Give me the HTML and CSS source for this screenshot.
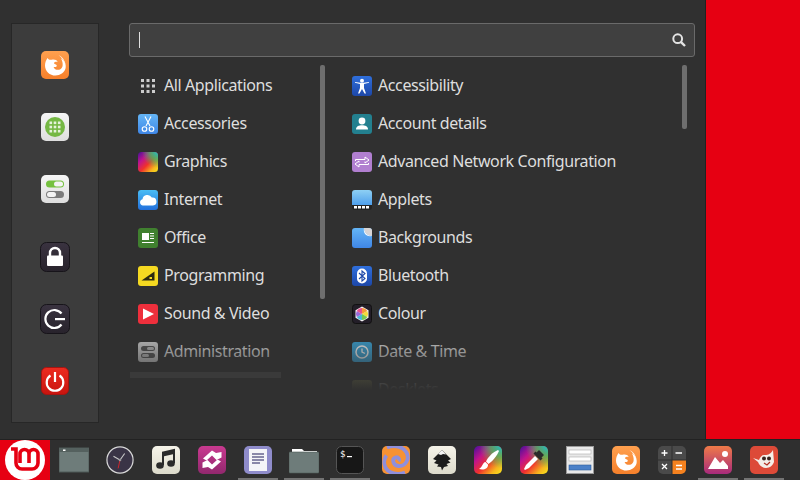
FILE: index.html
```html
<!DOCTYPE html>
<html lang="en">
<head>
  <meta charset="UTF-8" />
  <meta name="viewport" content="width=device-width, initial-scale=1.0"/>
  <title>Menu</title>
  <link rel="stylesheet" href="styles.css">
</head>
<body>
  <svg class="defs">
    <defs>
      <linearGradient id="gOrange" x1="0" y1="0" x2="0" y2="1"><stop offset="0" stop-color="#ffa04f"/><stop offset="1" stop-color="#f5802b"/></linearGradient>
      <linearGradient id="gLight" x1="0" y1="0" x2="0" y2="1"><stop offset="0" stop-color="#f6f6f6"/><stop offset="1" stop-color="#dedede"/></linearGradient>
      <linearGradient id="gDark" x1="0" y1="0" x2="0" y2="1"><stop offset="0" stop-color="#3a3340"/><stop offset="1" stop-color="#28232c"/></linearGradient>
      <linearGradient id="gRed" x1="0" y1="0" x2="0" y2="1"><stop offset="0" stop-color="#ec2b20"/><stop offset="1" stop-color="#c8140e"/></linearGradient>
      <linearGradient id="gBlue" x1="0" y1="0" x2="0" y2="1"><stop offset="0" stop-color="#64b5f6"/><stop offset="1" stop-color="#3f86e6"/></linearGradient>
      <linearGradient id="gSky" x1="0" y1="0" x2="0" y2="1"><stop offset="0" stop-color="#49bdf5"/><stop offset="1" stop-color="#2270dc"/></linearGradient>
      <linearGradient id="gApplet" x1="0" y1="0" x2="0" y2="1"><stop offset="0" stop-color="#8ed0f4"/><stop offset="1" stop-color="#4a9cec"/></linearGradient>
      <linearGradient id="gNavy" x1="0" y1="0" x2="0" y2="1"><stop offset="0" stop-color="#2f6fdc"/><stop offset="1" stop-color="#1d47a8"/></linearGradient>
      <linearGradient id="gRainbow" x1="0" y1="0" x2="1" y2="1"><stop offset="0" stop-color="#43109a"/><stop offset=".3" stop-color="#c0148c"/><stop offset=".55" stop-color="#f0322c"/><stop offset=".8" stop-color="#f7b41e"/><stop offset="1" stop-color="#f7e81e"/></linearGradient>
      <radialGradient id="gRainbow2" cx="1" cy="0" r=".8"><stop offset="0" stop-color="#18c0d0"/><stop offset=".5" stop-color="#40c060" stop-opacity=".75"/><stop offset="1" stop-color="#40c060" stop-opacity="0"/></radialGradient>
      <linearGradient id="gImage" x1="0" y1="0" x2="0" y2="1"><stop offset="0" stop-color="#ef7a48"/><stop offset="1" stop-color="#a82a7c"/></linearGradient>
      <linearGradient id="gPink" x1="0" y1="0" x2="0" y2="1"><stop offset="0" stop-color="#c93a90"/><stop offset="1" stop-color="#92286e"/></linearGradient>
      <linearGradient id="gPaper" x1="0" y1="0" x2="0" y2="1"><stop offset="0" stop-color="#f6f4ea"/><stop offset="1" stop-color="#dcdacb"/></linearGradient>
      <symbol id="fox" viewBox="0 0 28 28">
        <rect width="28" height="28" rx="5" fill="url(#gOrange)"/>
        <path d="M6.500 7C7.500 8.800 9.500 9.200 11.500 8.600C13.500 8.100 15.700 9 16.700 10.800C15 10.600 13.200 11 13 12.100C12.800 13.200 15.800 13.300 15.800 14.800C15.800 16 14 16.300 12.600 15.900C13.400 18.300 16.400 19.600 19 18.400C22.200 17 22.600 12.400 20 7.200C23.800 9.400 25.500 13.600 24.500 17.600C23.400 21.800 19.200 24.500 14.500 24.500C8.800 24.500 4 20.200 4 14.400C4 11.800 5 9 6.500 7Z" fill="#fff"/>
        <path d="M17.500 4C21 5.600 23.800 9 24.500 13C23 9.500 20.800 6.500 17.500 4Z" fill="#fff"/>
      </symbol>
      <symbol id="grid" viewBox="0 0 14 14">
        <g fill="#ccc">
          <rect x="0" y="0" width="3" height="3"/><rect x="5.500" y="0" width="3" height="3"/><rect x="11" y="0" width="3" height="3"/>
          <rect x="0" y="5.500" width="3" height="3"/><rect x="5.500" y="5.500" width="3" height="3"/><rect x="11" y="5.500" width="3" height="3"/>
          <rect x="0" y="11" width="3" height="3"/><rect x="5.500" y="11" width="3" height="3"/><rect x="11" y="11" width="3" height="3"/>
        </g>
      </symbol>
      <symbol id="rainbow" viewBox="0 0 20 20">
        <rect width="20" height="20" rx="3.500" fill="url(#gRainbow)"/>
        <rect width="20" height="20" rx="3.500" fill="url(#gRainbow2)"/>
      </symbol>
    </defs>
  </svg>

  <div class="desktop">
    <div class="menu">
      <div class="sidebar">
        <svg class="side-icon" viewBox="0 0 28 28"><use href="#fox"/></svg>
        <svg class="side-icon" viewBox="0 0 28 28">
          <rect width="28" height="28" rx="5" fill="url(#gLight)"/>
          <circle cx="14" cy="14" r="10" fill="#75b844"/>
          <g fill="#e6f2dc"><rect x="8.500" y="8.500" width="2.600" height="2.600"/><rect x="12.700" y="8.500" width="2.600" height="2.600"/><rect x="16.900" y="8.500" width="2.600" height="2.600"/><rect x="8.500" y="12.700" width="2.600" height="2.600"/><rect x="12.700" y="12.700" width="2.600" height="2.600"/><rect x="16.900" y="12.700" width="2.600" height="2.600"/><rect x="8.500" y="16.900" width="2.600" height="2.600"/><rect x="12.700" y="16.900" width="2.600" height="2.600"/><rect x="16.900" y="16.900" width="2.600" height="2.600"/></g>
        </svg>
        <svg class="side-icon" viewBox="0 0 28 28">
          <rect width="28" height="28" rx="5" fill="url(#gLight)"/>
          <rect x="5" y="5.500" width="18" height="7" rx="3.500" fill="#75c13f"/>
          <rect x="13" y="6.500" width="9" height="5" rx="2.500" fill="#f4f4f4"/>
          <rect x="5" y="16" width="18" height="7" rx="3.500" fill="#7b7b7b"/>
          <rect x="6" y="17" width="9" height="5" rx="2.500" fill="#f4f4f4"/>
        </svg>
        <svg class="side-icon session first" viewBox="0 0 30 30">
          <rect x=".5" y=".5" width="29" height="29" rx="6" fill="url(#gDark)" stroke="#17141a"/>
          <path d="M10 14V11a5 5 0 0 1 10 0V14" fill="none" stroke="#fff" stroke-width="2.400"/>
          <rect x="7" y="13.500" width="16" height="10.500" rx="1" fill="#fff"/>
        </svg>
        <svg class="side-icon session" viewBox="0 0 30 30">
          <rect x=".5" y=".5" width="29" height="29" rx="6" fill="url(#gDark)" stroke="#17141a"/>
          <path d="M21.500 9.500A9 9 0 1 0 21.500 20.500" fill="none" stroke="#fff" stroke-width="2.200"/>
          <rect x="15" y="14" width="10" height="2.200" fill="#fff"/>
        </svg>
        <svg class="side-icon" viewBox="0 0 28 28">
          <rect x=".5" y=".5" width="27" height="27" rx="5" fill="url(#gRed)" stroke="#a81410"/>
          <path d="M9.500 8.500A8.300 8.300 0 1 0 18.500 8.500" fill="none" stroke="#fff" stroke-width="2.200"/>
          <rect x="12.900" y="5" width="2.200" height="10" fill="#fff"/>
        </svg>
      </div>

      <div class="content">
        <div class="search">
          <span class="caret"></span>
          <svg class="search-icon" viewBox="0 0 14 14"><circle cx="5.700" cy="5.700" r="4.400" fill="none" stroke="#e4e4e4" stroke-width="2"/><path d="M8.800 8.800L13 13" stroke="#e4e4e4" stroke-width="2.400"/></svg>
        </div>

        <div class="lists">
          <div class="list-wrap categories">
            <ul class="list">
              <li class="row"><svg class="row-icon" viewBox="0 0 20 20"><use href="#grid" x="3" y="3" width="14" height="14"/></svg>All Applications</li>
              <li class="row">
                <svg class="row-icon" viewBox="0 0 20 20"><rect width="20" height="20" rx="3" fill="url(#gBlue)"/><g fill="none" stroke="#fff" stroke-width="1.100"><path d="M7 2.500L12 12M13 2.500L8 12"/><circle cx="6.500" cy="15" r="2.300"/><circle cx="13.500" cy="15" r="2.300"/></g></svg>
                Accessories
              </li>
              <li class="row"><svg class="row-icon" viewBox="0 0 20 20"><use href="#rainbow"/></svg>Graphics</li>
              <li class="row">
                <svg class="row-icon" viewBox="0 0 20 20"><rect width="20" height="20" rx="3" fill="url(#gSky)"/><path d="M5 15.500a3.200 3.200 0 0 1-.5-6.300A5 5 0 0 1 13.800 7.500a4 4 0 0 1 1.200 8Z" fill="#fff"/></svg>
                Internet
              </li>
              <li class="row">
                <svg class="row-icon" viewBox="0 0 20 20"><rect width="20" height="20" rx="3" fill="#40802f"/><rect x="4" y="5" width="7" height="7" fill="#fff"/><path d="M12 5.500h4M12 8h4M12 10.500h4M4 14.500h12" stroke="#fff" stroke-width="1.100"/></svg>
                Office
              </li>
              <li class="row">
                <svg class="row-icon" viewBox="0 0 20 20"><rect width="20" height="20" rx="3" fill="#f5d921"/><path d="M3.500 14.500L16.500 5.500V14.500Z" fill="#2c2a10"/><rect x="11.500" y="11" width="2.500" height="2" fill="#f5d921"/></svg>
                Programming
              </li>
              <li class="row">
                <svg class="row-icon" viewBox="0 0 20 20"><rect width="20" height="20" rx="3" fill="#ee2f3c"/><path d="M5 4.500L16 10L5 15.500Z" fill="#fff"/></svg>
                Sound &amp; Video
              </li>
              <li class="row">
                <svg class="row-icon" viewBox="0 0 20 20"><rect width="20" height="20" rx="3" fill="#cfcfcf"/><rect x="3" y="4" width="14" height="5" rx="2.500" fill="#555"/><rect x="3" y="11" width="14" height="5" rx="2.500" fill="#555"/><rect x="9" y="5" width="7" height="3" rx="1.500" fill="#bbb"/><rect x="4" y="12" width="7" height="3" rx="1.500" fill="#bbb"/></svg>
                Administration
              </li>
            </ul>
            <div class="fade"></div>
            <div class="bar"></div>
          </div>
          <div class="track"><div class="thumb thumb-left"></div></div>

          <div class="list-wrap apps">
            <ul class="list">
              <li class="row">
                <svg class="row-icon" viewBox="0 0 20 20"><rect width="20" height="20" rx="3" fill="url(#gNavy)"/><circle cx="10" cy="4.700" r="2" fill="#fff"/><path d="M3 6.800L8 8V12L6 17.500H7.500L10 13L12.500 17.500H14L12 12V8L17 6.800V6L10 7L3 6Z" fill="#fff"/></svg>
                Accessibility
              </li>
              <li class="row">
                <svg class="row-icon" viewBox="0 0 20 20"><rect width="20" height="20" rx="3" fill="#23808f"/><circle cx="10" cy="7" r="3.400" fill="#fff"/><path d="M4 15.500C4 12 7 11.200 10 11.200S16 12 16 15.500Z" fill="#fff"/></svg>
                Account details
              </li>
              <li class="row">
                <svg class="row-icon" viewBox="0 0 20 20"><rect width="20" height="20" rx="3" fill="#b17fd0"/><path d="M3.500 9V7.500H13V5L17 8L13 11V9.500M16.500 11V12.500H7V15L3 12L7 9V10.500" fill="none" stroke="#fff" stroke-width="1"/></svg>
                Advanced Network Configuration
              </li>
              <li class="row">
                <svg class="row-icon" viewBox="0 0 20 20"><path d="M0 3a3 3 0 0 1 3-3H17a3 3 0 0 1 3 3V16H0Z" fill="url(#gApplet)"/><path d="M0 15H20V17a3 3 0 0 1-3 3H3a3 3 0 0 1-3-3Z" fill="#232323"/><path d="M2 16h3v2.500H2ZM6 16h3v2.500H6ZM10 16h3v2.500H10ZM14 16h3v2.500H14Z" fill="#fff"/></svg>
                Applets
              </li>
              <li class="row">
                <svg class="row-icon" viewBox="0 0 20 20"><rect width="20" height="20" rx="3" fill="url(#gBlue)"/><path d="M12 0H17a3 3 0 0 1 3 3V8C16 8 12 5 12 0Z" fill="#d8d4d4"/><path d="M12 0C12 5 16 8 20 8C14 9 11 5 12 0Z" fill="#fff"/></svg>
                Backgrounds
              </li>
              <li class="row">
                <svg class="row-icon" viewBox="0 0 20 20"><rect width="20" height="20" rx="3" fill="url(#gNavy)"/><rect x="5" y="2.500" width="10" height="15" rx="5" fill="#fff"/><path d="M7 7L13 12.500L10 15V5L13 7.500L7 13" fill="none" stroke="#1d47a8" stroke-width="1.100"/></svg>
                Bluetooth
              </li>
              <li class="row">
                <svg class="row-icon" viewBox="0 0 20 20"><rect x=".5" y=".5" width="19" height="19" rx="3" fill="#231e28" stroke="#111"/><path d="M10 2.500L16.500 6.200V13.800L10 17.500L3.500 13.800V6.200Z" fill="#f4f2f4"/><path d="M10 10L10 4A6 6 0 0 1 15.200 7Z" fill="#f59a3a"/><path d="M10 10L15.200 7A6 6 0 0 1 15.200 13Z" fill="#f3dc3a"/><path d="M10 10L15.200 13A6 6 0 0 1 10 16Z" fill="#78c850"/><path d="M10 10L10 16A6 6 0 0 1 4.800 13Z" fill="#4ab8d8"/><path d="M10 10L4.800 13A6 6 0 0 1 4.800 7Z" fill="#9a6ad8"/><path d="M10 10L4.800 7A6 6 0 0 1 10 4Z" fill="#e8508c"/></svg>
                Colour
              </li>
              <li class="row">
                <svg class="row-icon" viewBox="0 0 20 20"><rect width="20" height="20" rx="3" fill="#3aa5d8"/><circle cx="10" cy="10" r="6" fill="none" stroke="#fff" stroke-width="1.500"/><path d="M10 6.500V10L13 11.500" fill="none" stroke="#fff" stroke-width="1.300"/></svg>
                Date &amp; Time
              </li>
              <li class="row">
                <svg class="row-icon" viewBox="0 0 20 20"><rect width="20" height="20" rx="3" fill="#8a8a50"/></svg>
                Desklets
              </li>
            </ul>
            <div class="fade"></div>
          </div>
          <div class="track"><div class="thumb thumb-right"></div></div>
        </div>
      </div>
    </div>
    <div class="wallpaper"></div>
  </div>

  <div class="panel">
    <div class="start">
      <svg class="start-logo" viewBox="0 0 40 40">
        <circle cx="20" cy="20" r="20" fill="#fff"/>
        <path d="M6 9H11V23a6 6 0 0 0 6 6H27a6 6 0 0 0 6-6V14a4.500 4.500 0 0 0-9 0V23M24 14a4.500 4.500 0 0 0-9 0V23" fill="none" stroke="#e60012" stroke-width="3.600"/>
      </svg>
    </div>

    <div class="launcher">
      <svg class="dock-icon wide" viewBox="0 0 30 24"><rect width="30" height="24" fill="#6e7c7a" stroke="#4e5a58"/><rect width="30" height="4" fill="#55615f"/><rect x="4" y="1.500" width="2.500" height="1.500" fill="#fff"/></svg>
    </div>
    <div class="launcher">
      <svg class="dock-icon wide" viewBox="0 0 30 30"><circle cx="15" cy="15" r="14" fill="#3a3446" stroke="#d8d8d8" stroke-width="1.300"/><path d="M15 15L20 8M15 15L8 11" stroke="#c8c8c8" stroke-width="1.200"/><path d="M15 15L13 24" stroke="#d8242a" stroke-width="1"/><circle cx="15" cy="15" r="1.400" fill="#999"/></svg>
    </div>
    <div class="launcher">
      <svg class="dock-icon" viewBox="0 0 28 28"><rect width="28" height="28" rx="5" fill="url(#gPaper)"/><path d="M11 19V6.500L22 4V17" fill="none" stroke="#2a2a2a" stroke-width="2"/><path d="M11 6.500L22 4V8L11 10.500Z" fill="#2a2a2a"/><ellipse cx="8" cy="19.500" rx="3.800" ry="3.300" fill="#2a2a2a"/><ellipse cx="19" cy="17.500" rx="3.800" ry="3.300" fill="#2a2a2a"/></svg>
    </div>
    <div class="launcher">
      <svg class="dock-icon" viewBox="0 0 28 28"><rect width="28" height="28" rx="5" fill="url(#gPink)"/><path d="M5 12.500L14 4.500L18 7L23.500 6V11.500L18.500 14L14 9.500L8.500 14.500Z" fill="#fff"/><path d="M23 15.500L14 23.500L10 21L4.500 22V16.500L9.500 14L14 18.500L19.500 13.500Z" fill="#fff"/></svg>
    </div>
    <div class="launcher active">
      <svg class="dock-icon" viewBox="0 0 28 28"><rect width="28" height="28" rx="5" fill="#8f8ccb"/><rect x="5" y="3" width="18" height="22" fill="#f4f4f8"/><path d="M8 8H20M8 11H20M8 14H20M8 17H16" stroke="#67648f" stroke-width="1.300"/></svg>
    </div>
    <div class="launcher active">
      <svg class="dock-icon wide" viewBox="0 0 30 26"><path d="M3 2H13L15 4H28V8H3Z" fill="#fff"/><path d="M1 5H29a1 1 0 0 1 1 1V25a1 1 0 0 1-1 1H1a1 1 0 0 1-1-1V6a1 1 0 0 1 1-1Z" fill="#6e7c7a" stroke="#4e5a58" stroke-width=".6"/></svg>
    </div>
    <div class="launcher active">
      <svg class="dock-icon" viewBox="0 0 28 28"><rect x=".5" y=".5" width="27" height="27" rx="5" fill="#171717" stroke="#555"/><text class="term" x="4" y="11">$</text><rect x="11" y="10" width="5" height="1.200" fill="#fff"/></svg>
    </div>
    <div class="launcher">
      <svg class="dock-icon" viewBox="0 0 28 28">
        <rect width="28" height="28" rx="5" fill="#f79234"/>
        <path d="M5 1.500C12-1 21 0 24.500 6.500C28 13 23.500 20.500 16.500 20C11 19.500 9.500 13 13.500 11.500C16 10.500 18 13 16.500 15" fill="none" stroke="#8f8fdc" stroke-width="3.800"/>
        <path d="M23 26.500C16 29 7 28 3.500 21.500C1.500 17.500 2 12.500 4.500 9.500" fill="none" stroke="#8f8fdc" stroke-width="3.800"/>
      </svg>
    </div>
    <div class="launcher">
      <svg class="dock-icon" viewBox="0 0 28 28"><rect width="28" height="28" rx="5" fill="url(#gPaper)"/><path d="M14 4L5 13L8.500 14.500L6 17L10.500 18.500L9 20.500L13 21L14 24.500L16 21L20 20L18.500 18L22.500 16.500L20 14.500L23 13Z" fill="#1c1c1c"/><path d="M14 4L10 8L13 9L15 8L18 8.500Z" fill="#f4f4f4"/></svg>
    </div>
    <div class="launcher">
      <svg class="dock-icon" viewBox="0 0 28 28"><use href="#rainbow"/><path d="M24 4C19 6 14 11 12 15.500L14.500 18C18.500 15 23 10 25 5Z" fill="#fff"/><path d="M11.500 16C8.500 16.500 9 20.500 5 23C9.500 24.500 14.500 22.500 14 18.500Z" fill="#fff"/></svg>
    </div>
    <div class="launcher">
      <svg class="dock-icon" viewBox="0 0 28 28"><use href="#rainbow"/><path d="M19 4L24 9L21.500 11.500L22.500 12.500L20.500 14.500L13.500 7.500L15.500 5.500L16.500 6.500Z" fill="#2a2a2a"/><path d="M15 10L18 13L9 22L5 24L4 23L6 19Z" fill="#fff"/></svg>
    </div>
    <div class="launcher">
      <svg class="dock-icon" viewBox="0 0 28 28"><rect x=".5" y=".5" width="27" height="27" fill="#e8e8e8" stroke="#9a9a9a"/><rect x="3" y="4" width="22" height="4" fill="#fff" stroke="#aaa" stroke-width=".6"/><rect x="3" y="11" width="22" height="4" fill="#fff" stroke="#aaa" stroke-width=".6"/><rect x="3" y="19" width="22" height="5" fill="#4a80c8" stroke="#2c5a98" stroke-width=".6"/></svg>
    </div>
    <div class="launcher">
      <svg class="dock-icon" viewBox="0 0 28 28"><use href="#fox"/></svg>
    </div>
    <div class="launcher">
      <svg class="dock-icon" viewBox="0 0 28 28"><path d="M5 0H13.500V13.500H0V5a5 5 0 0 1 5-5Z" fill="#4a4a4a"/><path d="M14.500 0H23a5 5 0 0 1 5 5V13.500H14.500Z" fill="#4a4a4a"/><path d="M0 14.500H13.500V28H5a5 5 0 0 1-5-5Z" fill="#4a4a4a"/><path d="M14.500 14.500H28V23a5 5 0 0 1-5 5H14.500Z" fill="#f5821f"/><path d="M3.500 7H9.500M6.500 4V10M17.500 7H24M4 18L9 23M9 18L4 23M18 19.500H24M18 23H24" stroke="#fff" stroke-width="1.300"/></svg>
    </div>
    <div class="launcher active">
      <svg class="dock-icon" viewBox="0 0 28 28"><rect width="28" height="28" rx="5" fill="url(#gImage)"/><circle cx="21" cy="8" r="3" fill="#fff"/><path d="M4 23L11 11L16 17L19 14L24 20V23Z" fill="#fff"/></svg>
    </div>
    <div class="launcher active">
      <svg class="dock-icon" viewBox="0 0 28 28"><rect width="28" height="28" rx="5" fill="#dd4a38"/><path d="M3 12L9 14C10 11 12 9 14 9C17 9 20 9 23 4L24 16C23 19 20 22 16 22C12 22 9 19 8 16Z" fill="#f4eee8"/><circle cx="14" cy="12.500" r="2" fill="#3a2420"/><circle cx="19" cy="12.500" r="2" fill="#3a2420"/><path d="M14 17L17 19L20 16" fill="none" stroke="#b02e20" stroke-width="1.200"/></svg>
    </div>
  </div>
</body>
</html>
```

FILE: styles.css
```css
* {
  box-sizing: border-box;
}

body {
  margin: 0;
  width: 800px;
  height: 480px;
  overflow: hidden;
  font-family: "Noto Sans", sans-serif;
  background-color: #303030;
}

.defs {
  position: absolute;
  width: 0;
  height: 0;
}

.desktop {
  display: flex;
  height: 439px;
}

.menu {
  display: flex;
  width: 706px;
  background-color: #303030;
  border-right: 1px solid #222;
  padding: 23px 10px 0 11px;
}

.wallpaper {
  flex: 1;
  background-color: #e60012;
}

/* left strip with favourites and session buttons */
.sidebar {
  display: flex;
  flex-direction: column;
  align-items: center;
  width: 88px;
  height: 400px;
  padding-top: 27px;
  gap: 34px;
  background-color: #3c3c3c;
  border: 1px solid #272727;
}

.side-icon {
  width: 28px;
  height: 28px;
  flex: none;
}

.side-icon.session {
  width: 30px;
  height: 30px;
  margin: -1px 0;
}

.side-icon.first {
  margin-top: 5px;
}

.content {
  flex: 1;
  margin-left: 30px;
}

.search {
  display: flex;
  align-items: center;
  justify-content: space-between;
  height: 34px;
  padding: 0 8px 0 9px;
  background-color: #404040;
  border: 1px solid #6a6a6a;
  border-radius: 3px;
}

.caret {
  width: 1px;
  height: 16px;
  background-color: #e0e0e0;
}

.search-icon {
  width: 14px;
  height: 14px;
}

.lists {
  display: flex;
  height: 325px;
  margin-top: 8px;
}

.list-wrap {
  position: relative;
  overflow: hidden;
}

.categories {
  width: 191px;
}

.apps {
  width: 331px;
  margin-left: 26px;
}

.list {
  list-style: none;
  margin: 0;
  padding: 1px 0 0;
}

.row {
  display: flex;
  align-items: center;
  gap: 6px;
  height: 38px;
  padding-left: 9px;
  color: #dedede;
  font-size: 16px;
  letter-spacing: -0.4px;
  line-height: 20px;
  white-space: nowrap;
}

.apps .row {
  padding-left: 1px;
}

.row-icon {
  width: 20px;
  height: 20px;
  flex: none;
  margin-top: 2px;
}

.fade {
  position: absolute;
  left: 0;
  right: 0;
  top: 260px;
  height: 65px;
  background: linear-gradient(to bottom, rgba(48, 48, 48, 0), #303030);
}

.bar {
  position: absolute;
  left: 1px;
  top: 307px;
  width: 151px;
  height: 6px;
  background-color: #3a3a3a;
}

.track {
  width: 5px;
  flex: none;
}

.thumb {
  background-color: #6e6e6e;
  border-radius: 2px;
}

.thumb-left {
  height: 234px;
}

.thumb-right {
  height: 64px;
}

/* bottom panel */
.panel {
  display: flex;
  height: 41px;
  background-color: #2f2f2f;
  border-top: 1px solid #222;
}

.start {
  display: flex;
  align-items: center;
  justify-content: center;
  width: 50px;
  margin-right: 1px;
  background-color: #e60012;
}

.start-logo {
  width: 40px;
  height: 40px;
}

.launcher {
  position: relative;
  display: flex;
  align-items: center;
  justify-content: center;
  width: 46px;
}

.launcher.active::after {
  content: "";
  position: absolute;
  left: 3px;
  right: 3px;
  bottom: 0;
  height: 2px;
  background-color: #737373;
}

.dock-icon {
  width: 28px;
  height: 28px;
}

.dock-icon.wide {
  width: 30px;
}

.term {
  fill: #fff;
  font-family: "DejaVu Sans Mono", monospace;
  font-size: 9px;
}
```
